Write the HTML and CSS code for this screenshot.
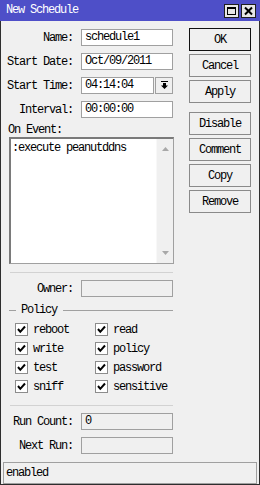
FILE: index.html
```html
<!DOCTYPE html>
<html>
<head>
<meta charset="utf-8">
<link rel="stylesheet" href="styles.css">
</head>
<body>
<div class="window">
  <div class="titlebar">
    <span class="title">New Schedule</span>
    <div class="tb-buttons">
      <span class="tb-btn">
        <svg width="13" height="12" viewBox="0 0 13 12"><rect x="2.5" y="2.5" width="8" height="7" fill="none" stroke="#000" stroke-width="1"/><rect x="2" y="2" width="9" height="2" fill="#000"/></svg>
      </span>
      <span class="tb-btn">
        <svg width="13" height="12" viewBox="0 0 13 12"><path d="M3 2.5 L10 9.5 M10 2.5 L3 9.5" stroke="#000" stroke-width="2"/></svg>
      </span>
    </div>
  </div>
  <div class="content">
    <div class="form">
      <div class="row"><span class="lbl">Name:</span><div class="field white">schedule1</div></div>
      <div class="row"><span class="lbl">Start Date:</span><div class="field white">Oct/09/2011</div></div>
      <div class="row"><span class="lbl">Start Time:</span><div class="field white short">04:14:04</div><span class="drop"><svg width="9" height="9" viewBox="0 0 9 9"><rect x="1" y="0" width="7" height="1" fill="#000"/><path d="M3 2 H6 V4.5 H8 L4.5 8 L1 4.5 H3 Z" fill="#000"/></svg></span></div>
      <div class="row"><span class="lbl">Interval:</span><div class="field white">00:00:00</div></div>
      <div class="ev-label">On Event:</div>
      <div class="textarea">
        <div class="ta-text">:execute peanutddns</div>
        <div class="scroll">
          <svg width="7" height="4" viewBox="0 0 7 4"><path d="M3.5 0 L7 4 L0 4 Z" fill="#a8a8a8"/></svg>
          <svg width="7" height="4" viewBox="0 0 7 4"><path d="M0 0 L7 0 L3.5 4 Z" fill="#a8a8a8"/></svg>
        </div>
      </div>
      <div class="sep"></div>
      <div class="row owner"><span class="lbl">Owner:</span><div class="field"></div></div>
      <div class="group"><span class="gline first"></span><span class="gtext">Policy</span><span class="gline rest"></span></div>
      <div class="checks">
        <div class="chk"><span class="box"><svg width="11" height="11" viewBox="0 0 11 11"><path d="M2 5 L4.3 7.8 L9 2.5" fill="none" stroke="#000" stroke-width="2"/></svg></span>reboot</div>
        <div class="chk"><span class="box"><svg width="11" height="11" viewBox="0 0 11 11"><path d="M2 5 L4.3 7.8 L9 2.5" fill="none" stroke="#000" stroke-width="2"/></svg></span>read</div>
        <div class="chk"><span class="box"><svg width="11" height="11" viewBox="0 0 11 11"><path d="M2 5 L4.3 7.8 L9 2.5" fill="none" stroke="#000" stroke-width="2"/></svg></span>write</div>
        <div class="chk"><span class="box"><svg width="11" height="11" viewBox="0 0 11 11"><path d="M2 5 L4.3 7.8 L9 2.5" fill="none" stroke="#000" stroke-width="2"/></svg></span>policy</div>
        <div class="chk"><span class="box"><svg width="11" height="11" viewBox="0 0 11 11"><path d="M2 5 L4.3 7.8 L9 2.5" fill="none" stroke="#000" stroke-width="2"/></svg></span>test</div>
        <div class="chk"><span class="box"><svg width="11" height="11" viewBox="0 0 11 11"><path d="M2 5 L4.3 7.8 L9 2.5" fill="none" stroke="#000" stroke-width="2"/></svg></span>password</div>
        <div class="chk"><span class="box"><svg width="11" height="11" viewBox="0 0 11 11"><path d="M2 5 L4.3 7.8 L9 2.5" fill="none" stroke="#000" stroke-width="2"/></svg></span>sniff</div>
        <div class="chk"><span class="box"><svg width="11" height="11" viewBox="0 0 11 11"><path d="M2 5 L4.3 7.8 L9 2.5" fill="none" stroke="#000" stroke-width="2"/></svg></span>sensitive</div>
      </div>
      <div class="sep sep2"></div>
      <div class="row runcount"><span class="lbl">Run Count:</span><div class="field">0</div></div>
      <div class="row"><span class="lbl">Next Run:</span><div class="field"></div></div>
    </div>
    <div class="buttons">
      <div class="btn default">OK</div>
      <div class="btn">Cancel</div>
      <div class="btn">Apply</div>
      <div class="btn spaced">Disable</div>
      <div class="btn">Comment</div>
      <div class="btn">Copy</div>
      <div class="btn">Remove</div>
    </div>
  </div>
  <div class="status">enabled</div>
</div>
</body>
</html>
```

FILE: styles.css
```css
* { box-sizing: border-box; }
html, body { margin: 0; padding: 0; background: #f0f0f0; }
body {
  font-family: "Liberation Mono", "DejaVu Sans Mono", monospace;
  font-size: 12px;
  letter-spacing: -1.2px;
  color: #000;
}
.window {
  width: 260px;
  height: 485px;
  background: #f0f0f0;
  border: 1px solid #2e2e2e;
  border-top: 0;
  display: flex;
  flex-direction: column;
}
.titlebar {
  height: 21px;
  margin: 0 -1px;
  background: #4e4fc8;
  display: flex;
  align-items: center;
  justify-content: space-between;
  padding: 0 4px 1px 6px;
}
.title { color: #fff; }
.tb-buttons { display: flex; gap: 2px; margin-top: 2px; }
.tb-btn {
  width: 15px;
  height: 14px;
  background: #e6e6e6;
  border: 1px solid #1e1e1e;
  display: flex;
  align-items: center;
  justify-content: center;
}
.content {
  display: flex;
  gap: 16px;
}
.form {
  width: 172px;
  padding-top: 8px;
  display: flex;
  flex-direction: column;
}
.row {
  display: flex;
  align-items: center;
  height: 17px;
  margin-bottom: 7px;
}
.lbl {
  width: 72px;
  text-align: right;
  margin-right: 8px;
  white-space: nowrap;
}
.field {
  width: 92px;
  height: 17px;
  border: 1px solid #a0a0a0;
  background: #f0f0f0;
  padding: 0 3px;
  line-height: 15px;
  white-space: nowrap;
}
.field.white { background: #fff; }
.field.short { width: 73px; }
.drop {
  width: 18px;
  height: 17px;
  margin-left: 1px;
  border: 1px solid #a0a0a0;
  background: #f0f0f0;
  display: flex;
  align-items: center;
  justify-content: center;
}
.ev-label {
  margin: -2px 0 0 7px;
  height: 14px;
  line-height: 14px;
}
.textarea {
  margin-left: 8px;
  width: 165px;
  height: 127px;
  border: 1px solid #a0a0a0;
  border-top: 2px solid #7a7a7a;
  border-left: 2px solid #7a7a7a;
  background: #fff;
  display: flex;
}
.ta-text {
  flex: 1;
  padding: 3px 0 0 1px;
  line-height: 12px;
}
.scroll {
  width: 17px;
  background: #f0f0f0;
  border-left: 1px solid #f8f8f8;
  display: flex;
  flex-direction: column;
  align-items: center;
  justify-content: space-between;
  padding: 8px 0 8px;
}
.sep {
  margin: 8px 0 0 9px;
  width: 163px;
  height: 1px;
  background: #d2d2d2;
}
.owner { margin-top: 7px; margin-bottom: 6px; }
.group {
  display: flex;
  align-items: center;
  height: 14px;
}
.gline { height: 1px; background: #a0a0a0; }
.gline.first { width: 7px; margin-left: 8px; }
.gtext { margin: 0 6px 0 5px; }
.gline.rest { flex: 1; }
.checks {
  margin-top: 6px;
  display: grid;
  grid-template-columns: 80px 80px;
  row-gap: 6px;
  padding-left: 14px;
}
.chk {
  display: flex;
  align-items: center;
  height: 13px;
  white-space: nowrap;
}
.box {
  width: 13px;
  height: 13px;
  border: 1px solid #8c8c8c;
  background: #fff;
  margin-right: 5px;
  display: flex;
  align-items: center;
  justify-content: center;
}
.sep2 { margin-top: 12px; }
.runcount { margin-top: 7px; }
.form .row:last-child { margin-bottom: 0; }
.buttons {
  padding-top: 7px;
  display: flex;
  flex-direction: column;
  gap: 3px;
}
.btn {
  width: 62px;
  height: 23px;
  border: 1px solid #8a8a8a;
  background: #f0f0f0;
  display: flex;
  align-items: center;
  justify-content: center;
}
.btn.default { border-color: #111; }
.btn.spaced { margin-top: 6px; }
.status {
  margin: 8px 2px 0 2px;
  height: 22px;
  border: 1px solid #a0a0a0;
  padding-left: 2px;
  line-height: 20px;
}
```
